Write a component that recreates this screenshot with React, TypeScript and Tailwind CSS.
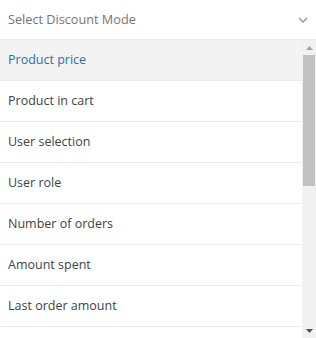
import React from "react";

const items = [
  "Product price",
  "Product in cart",
  "User selection",
  "User role",
  "Number of orders",
  "Amount spent",
  "Last order amount",
];

export default function App() {
  return (
    <div
      className="w-[316px] h-[338px] bg-white overflow-hidden flex flex-col"
      style={{ fontFamily: '"Open Sans", sans-serif' }}
    >
      <div className="h-[40px] shrink-0 border-b border-[#ececec] flex items-center justify-between pl-[8px] pr-[8px]">
        <span className="text-[12.7px] text-[#757575] pt-[1px]">Select Discount Mode</span>
        <svg width="10" height="6" viewBox="0 0 10 6" className="mt-[1px]">
          <path d="M1 1 L5 5 L9 1" fill="none" stroke="#9a9a9a" strokeWidth="1.5" />
        </svg>
      </div>
      <div className="flex flex-1 min-h-0">
        <div className="flex-1 overflow-hidden">
          {items.map((t, i) => (
            <div
              key={t}
              className={`h-[41px] border-b border-[#ececec] flex items-center pl-[8px] pt-[1px] text-[12.5px] ${
                i === 0 ? "bg-[#f3f3f3] text-[#2271b1]" : "bg-white text-[#3c434a]"
              }`}
            >
              {t}
            </div>
          ))}
        </div>
        <div className="w-[14px] shrink-0 bg-[#f1f1f1] flex flex-col">
          <div className="h-[15px] flex items-center justify-center">
            <svg width="7" height="4" viewBox="0 0 7 4">
              <path d="M3.5 0 L7 4 L0 4 Z" fill="#a3a3a3" />
            </svg>
          </div>
          <div className="h-[131px] bg-[#c1c1c1] mx-[1px]" />
          <div className="flex-1" />
          <div className="h-[15px] flex items-center justify-center">
            <svg width="7" height="4" viewBox="0 0 7 4">
              <path d="M0 0 L7 0 L3.5 4 Z" fill="#505050" />
            </svg>
          </div>
        </div>
      </div>
    </div>
  );
}
